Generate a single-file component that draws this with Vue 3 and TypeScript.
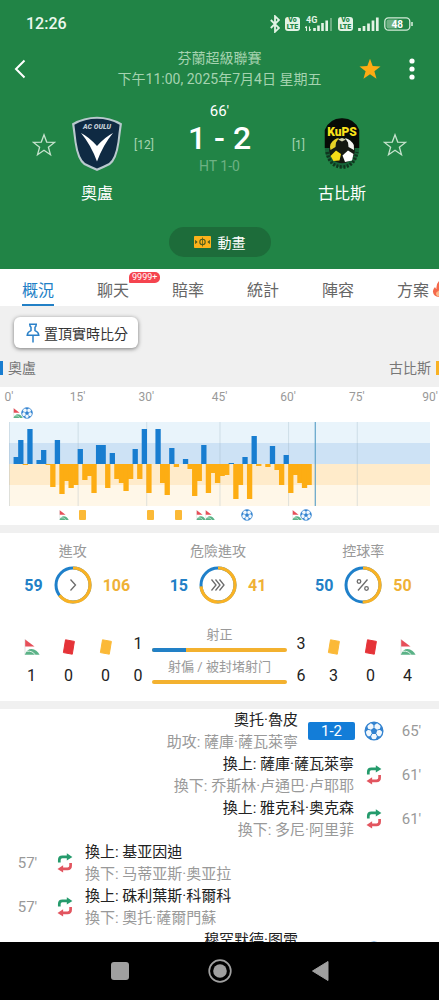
<script setup lang="ts">
type Side = 'home' | 'away'

interface MatchEvent {
  side: Side
  kind: 'goal' | 'sub'
  minute: string
  main: string
  detail: string
  score?: string
}

interface Marker {
  slot: number
  icon: 'flag' | 'ball' | 'card'
}

const tabs = ['概況', '聊天', '賠率', '統計', '陣容', '方案']

const slots = 92
const axis = [
  { slot: 0, label: "0'" },
  { slot: 15, label: "15'" },
  { slot: 30, label: "30'" },
  { slot: 46, label: "45'" },
  { slot: 61, label: "60'" },
  { slot: 76, label: "75'" },
  { slot: 92, label: "90'" },
]

// Positive values are home pressure, negative values are away pressure.
const pressure: number[] = [
  0, 7, 24, -1, 35, 0, 4, 14, -1, -23, 24, -30, -17, -24, -21, 15, -16, -12, -29, 19,
  19, -24, 11, -15, -19, -27, -15, 15, -15, 35, -29, 0, 35, -19, -31, 16, -3, 0, 5, -5,
  -32, -17, 19, -29, -9, -19, -12, -11, 1, -35, -21, 7, -35, 28, -2, 0, -3, 18, -6, -21,
  9, -29, -11, -19, -24, -21,
]

const homeMarkers: Marker[] = [
  { slot: 2, icon: 'flag' },
  { slot: 4, icon: 'ball' },
]
const awayMarkers: Marker[] = [
  { slot: 12, icon: 'flag' },
  { slot: 16, icon: 'card' },
  { slot: 31, icon: 'card' },
  { slot: 37, icon: 'card' },
  { slot: 42, icon: 'flag' },
  { slot: 44, icon: 'flag' },
  { slot: 52, icon: 'ball' },
  { slot: 63, icon: 'flag' },
  { slot: 65, icon: 'ball' },
]

const rings = [
  { title: '進攻', home: 59, away: 106, icon: 'one' },
  { title: '危險進攻', home: 15, away: 41, icon: 'three' },
  { title: '控球率', home: 50, away: 50, icon: 'percent' },
]
const circumference = 2 * Math.PI * 17
const awayArc = (home: number, away: number) => {
  const length = (circumference * away) / (home + away)
  return `${length} ${circumference - length}`
}

const homeCards = [
  { icon: 'corner', value: 1, label: '角球' },
  { icon: 'red', value: 0, label: '紅牌' },
  { icon: 'yellow', value: 0, label: '黃牌' },
]
const awayCards = [
  { icon: 'yellow', value: 3, label: '黃牌' },
  { icon: 'red', value: 0, label: '紅牌' },
  { icon: 'corner', value: 4, label: '角球' },
]
const shots = [
  { label: '射正', home: 1, away: 3 },
  { label: '射偏 / 被封堵射门', home: 0, away: 6 },
]

const events: MatchEvent[] = [
  { side: 'away', kind: 'goal', minute: "65'", main: '奧托·魯皮', detail: '助攻: 薩庫·薩瓦萊寧', score: '1-2' },
  { side: 'away', kind: 'sub', minute: "61'", main: '換上: 薩庫·薩瓦萊寧', detail: '換下: 乔斯林·卢通巴·卢耶耶' },
  { side: 'away', kind: 'sub', minute: "61'", main: '換上: 雅克科·奥克森', detail: '換下: 多尼·阿里菲' },
  { side: 'home', kind: 'sub', minute: "57'", main: '換上: 基亚因迪', detail: '換下: 马蒂亚斯·奥亚拉' },
  { side: 'home', kind: 'sub', minute: "57'", main: '換上: 硃利葉斯·科爾科', detail: '換下: 奧托·薩爾門蘇' },
  { side: 'away', kind: 'goal', minute: '', main: '穆罕默德·图雷', detail: '', score: '' },
]
</script>

<template>
  <div class="app">
    <svg class="defs" aria-hidden="true">
      <symbol id="i-ball" viewBox="0 0 20 20">
        <circle cx="10" cy="10" r="8.9" fill="#f2f8fd" stroke="#3383d0" stroke-width="1.3" />
        <path d="M10 6.6l3.3 2.4-1.2 3.9H7.9L6.7 9z" fill="#3383d0" />
        <path d="M6.4 1.7Q10 .4 13.6 1.7L10 4.6zM17 4.400Q19.300 7.400 19 11.500L15.600 8.500zM17 15.400Q14.800 18.200 11.600 18.900L13 15zM3 15.400Q5.200 18.200 8.400 18.900L7 15zM3 4.400Q.7 7.400 1 11.500L4.400 8.500z" fill="#3383d0" />
        <path d="M10 6.600V4M13.300 9L16 8.300M12.100 12.900L13.500 15.400M7.900 12.900L6.500 15.400M6.700 9L4 8.300" stroke="#3383d0" />
      </symbol>
      <symbol id="i-flag" viewBox="0 0 16 16">
        <path d="M1 0V16" stroke="#d9dcdc" stroke-width=".8" />
        <path d="M1.200.5L10.500 7.400H1.200z" fill="#e64f59" />
        <path d="M.8 15.800Q3 10 7.500 10Q13 10.400 15.600 15.800z" fill="#5bb287" />
        <path d="M2.600 12.200Q9 11.800 11 15.800" fill="none" stroke="#dff1e7" />
      </symbol>
      <symbol id="i-card" viewBox="0 0 16 16">
        <path d="M4.500.8L13.400 2.400L11.300 15.200L2.400 13.600z" fill="currentColor" stroke="currentColor" stroke-linejoin="round" />
      </symbol>
      <symbol id="i-sub" viewBox="0 0 20 20">
        <path d="M4.300 9.600V7Q4.300 3.900 7.400 3.900H13" fill="none" stroke="#259b6c" stroke-width="2.700" />
        <path d="M11.800.2L17.400 3.900L11.800 7.600z" fill="#259b6c" />
        <path d="M15.600 10V12.800Q15.600 15.900 12.500 15.900H7" fill="none" stroke="#e2555f" stroke-width="2.700" />
        <path d="M8.100 12.200L2.500 15.900L8.100 19.600z" fill="#e2555f" />
      </symbol>
      <symbol id="i-star" viewBox="0 0 24 24">
        <path d="M12 1.800L14.700 9.100L22.500 9.400L16.400 14.200L18.500 21.700L12 17.300L5.500 21.700L7.600 14.200L1.500 9.400L9.300 9.100z" />
      </symbol>
    </svg>

    <header class="hero">
      <div class="status">
        <time>12:26</time>
        <div class="status-icons">
          <svg width="10" height="18" viewBox="0 0 10 18"><path d="M.8 5L9 13L5 16.800V1.200L9 5L.8 13" fill="none" stroke="#e3f3e5" stroke-width="1.800" /></svg>
          <span class="volte"><span>Vo</span><span>LTE</span></span>
          <svg width="28" height="16" viewBox="0 0 28 16">
            <text x="1" y="7" class="net-text">4G</text>
            <path d="M1.500 15V10.500M.2 12L1.500 10.200M4.500 10.500V15M4.500 15L5.800 13.200" stroke="#e3f3e5" stroke-width="1.100" fill="none" />
            <path d="M9.500 15V12M13.500 15V9.500M17.500 15V7M21.700 15V4.500" stroke="#e3f3e5" stroke-width="2.600" />
            <path d="M26 15V2" stroke="#6aad80" stroke-width="2" />
          </svg>
          <span class="volte"><span>Vo</span><span>LTE</span></span>
          <svg width="21" height="14" viewBox="0 0 21 14"><path d="M1.500 14V11M6 14V9M10.500 14V6.500M15 14V3.500M19.300 14V.5" stroke="#e3f3e5" stroke-width="2.700" /></svg>
          <svg width="29" height="14" viewBox="0 0 29 14">
            <rect x=".8" y=".8" width="25" height="12.400" rx="3.600" fill="none" stroke="#d2ead7" stroke-width="1.300" />
            <path d="M4.500 2.500H13.500V11.500H4.500Q2.500 11.500 2.500 9.500V4.500Q2.500 2.500 4.500 2.500z" fill="#6fb184" />
            <path d="M28 5V9" stroke="#d2ead7" stroke-width="1.600" />
            <text x="13.300" y="10.700" text-anchor="middle" class="battery-text">48</text>
          </svg>
        </div>
      </div>

      <div class="title-bar">
        <button class="bare back" aria-label="返回">
          <svg width="12" height="20" viewBox="0 0 12 20"><path d="M10.500 1.500L2 10L10.500 18.500" fill="none" stroke="#fff" stroke-width="2" /></svg>
        </button>
        <div class="title-text">
          <div>芬蘭超級聯賽</div>
          <div>下午11:00, 2025年7月4日 星期五</div>
        </div>
        <div class="title-actions">
          <button class="bare act-star" aria-label="收藏比賽"><svg width="24" height="24" fill="#fdab14"><use href="#i-star" /></svg></button>
          <button class="bare act-more" aria-label="更多"><svg width="6" height="22" viewBox="0 0 6 22" fill="#fff"><circle cx="3" cy="3" r="2.600" /><circle cx="3" cy="11" r="2.600" /><circle cx="3" cy="19" r="2.600" /></svg></button>
        </div>
      </div>

      <div class="scoreboard">
        <button class="bare fav" aria-label="收藏奧盧"><svg width="24" height="24" fill="none" stroke="#c6e3cd" stroke-width="1.300"><use href="#i-star" /></svg></button>
        <div class="team">
          <svg width="52" height="56" viewBox="0 0 52 56">
            <path d="M1 7.500Q13 .8 26 .8T51 7.500Q50 14 48.500 26Q46 44 39 49Q33 52 26 55Q19 52 13 49Q6 44 3.500 26Q2 14 1 7.500z" fill="#b9c9ce" />
            <path d="M3.400 8.700Q14 2.800 26 2.800T48.600 8.700Q47.600 16 46.500 26Q44 42.500 38 47Q32 50 26 52.600Q20 50 14 47Q8 42.500 5.500 26Q4.400 16 3.400 8.700z" fill="#0f2a43" />
            <text x="26" y="13" text-anchor="middle" class="crest-home">AC OULU</text>
            <path d="M10 17Q18 21 26 30Q34 21 42 17Q32 29 26 45.500Q20 29 10 17z" fill="#fff" />
          </svg>
          <div class="team-name">奧盧</div>
        </div>
        <div class="rank">[12]</div>
        <div class="score">
          <div class="minute">66'</div>
          <div class="goals">1 - 2</div>
          <div class="half">HT 1-0</div>
        </div>
        <div class="rank rank-away">[1]</div>
        <div class="team">
          <svg width="36" height="56" viewBox="0 0 36 56">
            <path d="M.8 32V14Q5 2.500 18 2.200Q31 2.500 35.200 14V32Q35 48 18 52Q1 48 .8 32z" fill="#166438" />
            <path d="M.8 32V14Q5 2.500 18 2.200Q31 2.500 35.200 14V32z" fill="#070b06" />
            <path d="M3 36Q6 51 18 51T33 36" fill="none" stroke="#10351e" stroke-width="3.500" stroke-dasharray="2 1.500" />
            <circle cx="18" cy="34.500" r="12.800" fill="#151a12" />
            <path d="M6.500 28Q10 22.500 15 22L12 26.500L11.500 31L6.500 34Q5.500 31 6.500 28z" fill="#e6d326" />
            <path d="M21 22Q27 23.500 29.800 29L30 34L24.500 31L24 26.500z" fill="#f4f6f2" />
            <path d="M14 23.500L18 22L22 23.500L18 25.500z" fill="#d6d6b0" />
            <path d="M12 34.500L17 38L15.500 44.500L9.500 45L6.500 40z" fill="#f5dc17" />
            <path d="M24 34.500L29.500 38L28 44.500L21 46L18.500 39.500z" fill="#fff" />
            <text x="18" y="19.500" text-anchor="middle" class="crest-away">KuPS</text>
          </svg>
          <div class="team-name">古比斯</div>
        </div>
        <button class="bare fav" aria-label="收藏古比斯"><svg width="24" height="24" fill="none" stroke="#c6e3cd" stroke-width="1.300"><use href="#i-star" /></svg></button>
      </div>

      <button class="animation">
        <svg width="17" height="12" viewBox="0 0 17 12">
          <rect width="17" height="12" rx=".8" fill="#fcb21b" />
          <circle cx="8.500" cy="6" r="2.700" fill="none" stroke="#4f5b1c" stroke-width="1.100" />
          <path d="M8.500 1.500V10.500M1.500 4.500L3.200 6L1.500 7.500zM15.500 4.500L13.800 6L15.500 7.500z" fill="#4f5b1c" stroke="#4f5b1c" stroke-width=".8" />
        </svg>
        <span>動畫</span>
      </button>
    </header>

    <nav class="tabs">
      <button v-for="(tab, i) in tabs" :key="tab" class="bare tab" :class="{ active: i === 0 }">
        {{ tab }}
        <span v-if="i === 1" class="badge">9999+</span>
        <svg v-if="i === 5" class="flame" width="14" height="16" viewBox="0 0 14 16">
          <path d="M7 0Q8.500 3 10.500 5Q13.500 8 13 11Q12 16 7 16Q1.500 15.500 1 11Q.6 8.500 3 6Q3.500 7.500 4.500 8Q4 3 7 0z" fill="#f4694b" />
          <path d="M7.500 7Q10.500 10 10 12.500Q9.500 15.500 7 15.500Q4 15 4 12.500Q4.200 11 5.500 10.500Q7.500 9.500 7.500 7z" fill="#fdb98a" />
        </svg>
      </button>
    </nav>

    <main class="content">
      <section class="pin-area">
        <button class="pin">
          <svg width="14" height="20" viewBox="0 0 14 20"><path d="M3 1.200H11M4 1.200V3L5 4.200V7.600Q1.500 9 1.200 12.200H12.800Q12.500 9 9 7.600V4.200L10 3V1.200M7 12.200V19.500" fill="none" stroke="#2a80c8" stroke-width="1.500" /></svg>
          <span>置頂實時比分</span>
        </button>
        <div class="legend">
          <span class="legend-home">奧盧</span>
          <span class="legend-away">古比斯</span>
        </div>
      </section>

      <section class="chart">
        <div class="track axis">
          <span v-for="(a, i) in axis" :key="a.label" class="tick" :class="{ last: i === axis.length - 1 }" :style="{ gridColumnStart: Math.min(a.slot + 1, slots) }">{{ a.label }}</span>
        </div>
        <div class="track markers">
          <span v-for="m in homeMarkers" :key="m.slot" class="tick" :style="{ gridColumnStart: m.slot + 1 }">
            <svg :class="['m-' + m.icon]"><use :href="'#i-' + m.icon" /></svg>
          </span>
        </div>
        <svg class="plot" :viewBox="`0 0 ${slots} 84`" preserveAspectRatio="none">
          <rect :width="slots" height="21" fill="#e9f4fb" />
          <rect y="21" :width="slots" height="21" fill="#cde2f5" />
          <rect y="42" :width="slots" height="21" fill="#ffebca" />
          <rect y="63" :width="slots" height="21" fill="#fff7e8" />
          <rect v-for="a in axis.slice(0, 6)" :key="a.slot" :x="a.slot" width=".2" height="84" fill="#8ba5b5" opacity=".3" />
          <template v-for="(v, i) in pressure" :key="i">
            <rect v-if="v > 0" :x="i" :y="42 - v" width="1.160" :height="v" fill="#187dd0" />
            <rect v-if="v < 0" :x="i" y="42" width="1.160" :height="-v" fill="#fdad13" />
          </template>
          <rect x="66.800" width=".26" height="84" fill="#5fa3c8" />
        </svg>
        <div class="track markers">
          <span v-for="m in awayMarkers" :key="m.slot" class="tick" :style="{ gridColumnStart: m.slot + 1 }">
            <i v-if="m.icon === 'card'" class="m-card"></i>
            <svg v-else :class="['m-' + m.icon]"><use :href="'#i-' + m.icon" /></svg>
          </span>
        </div>
      </section>

      <section class="stats">
        <div class="rings">
          <div v-for="r in rings" :key="r.title" class="ring-cell">
            <div class="ring-title">{{ r.title }}</div>
            <div class="ring-row">
              <b class="ring-home">{{ r.home }}</b>
              <svg width="38" height="38" viewBox="0 0 38 38" fill="none">
                <circle cx="19" cy="19" r="17" stroke="#1f80ca" stroke-width="3" />
                <circle cx="19" cy="19" r="17" stroke="#f9b224" stroke-width="3.200" :stroke-dasharray="awayArc(r.home, r.away)" transform="rotate(-90 19 19)" />
                <g stroke="#6b6b6b" stroke-width="1.300">
                  <path v-if="r.icon === 'one'" d="M16.500 13.500L21.500 19L16.500 24.500" />
                  <path v-else-if="r.icon === 'three'" d="M12.500 13.500L17 19L12.500 24.500M16.500 13.500L21 19L16.500 24.500M20.500 13.500L25 19L20.500 24.500" />
                  <template v-else>
                    <path d="M23.500 13.500L14 24.500" />
                    <circle cx="15" cy="15.500" r="1.800" />
                    <circle cx="22.500" cy="22.500" r="1.800" />
                  </template>
                </g>
              </svg>
              <b class="ring-away">{{ r.away }}</b>
            </div>
          </div>
        </div>

        <div class="counts">
          <div v-for="c in homeCards" :key="c.icon" class="count">
            <svg width="16" height="16" :class="c.icon" role="img" :aria-label="c.label"><use :href="c.icon === 'corner' ? '#i-flag' : '#i-card'" /></svg>
            <span>{{ c.value }}</span>
          </div>
          <div class="shot-values"><span v-for="s in shots" :key="s.label">{{ s.home }}</span></div>
          <div class="shots">
            <div v-for="s in shots" :key="s.label" class="shot">
              <div class="shot-label">{{ s.label }}</div>
              <div class="bar"><div class="bar-home" :style="{ width: (100 * s.home) / (s.home + s.away) + '%' }"></div></div>
            </div>
          </div>
          <div class="shot-values"><span v-for="s in shots" :key="s.label">{{ s.away }}</span></div>
          <div v-for="c in awayCards" :key="c.icon" class="count">
            <svg width="16" height="16" :class="c.icon" role="img" :aria-label="c.label"><use :href="c.icon === 'corner' ? '#i-flag' : '#i-card'" /></svg>
            <span>{{ c.value }}</span>
          </div>
        </div>
      </section>

      <ul class="events">
        <li v-for="(e, i) in events" :key="i" class="event" :class="e.side">
          <time class="event-time">{{ e.minute }}</time>
          <svg width="20" height="20"><use :href="e.kind === 'goal' ? '#i-ball' : '#i-sub'" /></svg>
          <span v-if="e.kind === 'goal'" class="event-score">{{ e.score }}</span>
          <div class="event-text">
            <div>{{ e.main }}</div>
            <div class="detail">{{ e.detail }}</div>
          </div>
        </li>
      </ul>
    </main>

    <footer class="system-nav">
      <button class="bare" aria-label="最近"><svg width="18" height="18"><rect width="18" height="18" rx="3" fill="#a0a0a0" /></svg></button>
      <button class="bare" aria-label="主畫面"><svg width="24" height="24" viewBox="0 0 24 24"><circle cx="12" cy="12" r="10.800" fill="none" stroke="#a0a0a0" stroke-width="1.700" /><circle cx="12" cy="12" r="6.800" fill="#a0a0a0" /></svg></button>
      <button class="bare" aria-label="上一頁"><svg width="18" height="22" viewBox="0 0 18 22"><path d="M17 1.500V20.500L1.500 11z" fill="#a0a0a0" stroke="#a0a0a0" stroke-linejoin="round" /></svg></button>
    </footer>
  </div>
</template>

<style>
body {
  margin: 0;
  background: #fff;
}
</style>

<style scoped>
.app {
  display: flex;
  flex-direction: column;
  height: 100vh;
  overflow: hidden;
  background: #fff;
  color: #222;
  font-family: Roboto, "Noto Sans CJK TC", "Noto Sans CJK SC", sans-serif;
  font-size: 14px;
}
svg {
  display: block;
  flex: none;
}
.defs {
  position: absolute;
  width: 0;
  height: 0;
}
button {
  font: inherit;
  color: inherit;
  cursor: pointer;
}
.bare {
  display: flex;
  align-items: center;
  justify-content: center;
  padding: 0;
  border: 0;
  background: none;
}

.hero {
  flex: none;
  padding-bottom: 12px;
  background: #218446;
  color: #fff;
}
.status {
  display: flex;
  align-items: center;
  justify-content: space-between;
  height: 47px;
  padding: 0 26px;
  color: #ecf8ee;
  font-size: 16px;
  font-weight: 500;
}
.status-icons {
  display: flex;
  align-items: center;
  gap: 5px;
}
.volte {
  display: flex;
  flex-direction: column;
  align-items: center;
  width: 15px;
  border-radius: 3px;
  background: #e3f3e5;
  color: #218446;
  font-size: 7px;
  font-weight: 900;
  line-height: 7px;
}
.net-text {
  fill: #e3f3e5;
  font-size: 9px;
  font-weight: 700;
}
.battery-text {
  fill: #fff;
  font-size: 10px;
  font-weight: 700;
}
.title-bar {
  display: grid;
  grid-template-columns: 92px 1fr 92px;
  align-items: center;
  height: 44px;
}
.back {
  width: 40px;
  height: 40px;
}
.title-text {
  color: #a5d3b0;
  line-height: 21px;
  text-align: center;
  white-space: nowrap;
}
.title-actions {
  display: flex;
  justify-content: flex-end;
  padding-right: 7px;
}
.act-star {
  width: 44px;
  height: 40px;
}
.act-more {
  width: 40px;
  height: 40px;
}
.scoreboard {
  display: flex;
  align-items: flex-start;
  padding: 12px 24px 0;
}
.fav {
  width: 40px;
  height: 28px;
  margin-top: 28px;
}
.team {
  display: flex;
  flex-direction: column;
  align-items: center;
  gap: 10px;
  width: 66px;
  padding-top: 13px;
}
.crest-home {
  fill: #c3ced6;
  font-size: 7px;
  font-style: italic;
  font-weight: 900;
}
.crest-away {
  fill: #f9e21a;
  font-size: 12px;
  font-weight: 900;
}
.team-name {
  font-size: 16px;
  line-height: 24px;
  white-space: nowrap;
}
.rank {
  box-sizing: border-box;
  width: 28px;
  margin-top: 34px;
  padding: 0 4px;
  color: #a5d3b0;
  font-size: 12px;
  line-height: 16px;
}
.rank-away {
  text-align: right;
}
.score {
  flex: 1;
  text-align: center;
}
.minute {
  font-size: 15px;
  line-height: 17px;
}
.goals {
  font-size: 32px;
  font-weight: 500;
  line-height: 36px;
}
.half {
  color: #6db183;
  line-height: 20px;
}
.animation {
  display: flex;
  align-items: center;
  justify-content: center;
  gap: 7px;
  width: 102px;
  height: 30px;
  margin: 21px auto 0;
  padding: 0;
  border: 0;
  border-radius: 15px;
  background: #1d6c3a;
  color: #fff;
}

.tabs {
  display: flex;
  flex: none;
  gap: 43px;
  height: 37px;
  padding: 0 22px;
  overflow: hidden;
  color: #666;
  font-size: 16px;
  white-space: nowrap;
}
.tab {
  position: relative;
  flex: none;
  box-sizing: border-box;
  border-top: 4px solid transparent;
  border-bottom: 2px solid transparent;
}
.tab.active {
  border-bottom-color: #2280c6;
  color: #2280c6;
}
.badge {
  position: absolute;
  top: -1px;
  left: 32px;
  padding: 0 3px;
  border-radius: 5px 5px 5px 1px;
  background: #f5444f;
  color: #fff;
  font-size: 9px;
  line-height: 11px;
}
.flame {
  margin-left: 3px;
}

.content {
  flex: 1;
  min-height: 0;
  overflow-y: auto;
  scrollbar-width: none;
}
.pin-area {
  padding-top: 11px;
  background: #f0f0f0;
}
.pin {
  display: flex;
  align-items: center;
  gap: 4px;
  height: 31px;
  margin-left: 14px;
  padding: 0 10px 0 12px;
  border: 0;
  border-radius: 6px;
  background: #fff;
  box-shadow: 0 1px 4px rgba(0, 0, 0, 0.5);
  color: #333;
}
.legend {
  display: flex;
  align-items: center;
  justify-content: space-between;
  height: 39px;
  color: #777;
  line-height: 14px;
}
.legend-home {
  padding-left: 5px;
  border-left: 3px solid #187dd0;
}
.legend-away {
  padding-right: 5px;
  border-right: 3px solid #f9b224;
}

.chart {
  padding: 0 9px 4px;
  border-bottom: 8px solid #f0f0f0;
}
.track {
  display: grid;
  grid-template-columns: repeat(92, minmax(0, 1fr));
  align-items: center;
}
.axis {
  height: 20px;
  color: #999;
  font-size: 12px;
}
.tick {
  display: flex;
  grid-row: 1;
  justify-content: center;
  width: 0;
}
.last {
  justify-self: end;
}
.markers {
  height: 12px;
}
.m-ball {
  width: 12px;
  height: 12px;
}
.m-flag {
  width: 10px;
  height: 10px;
}
.m-card {
  flex: none;
  width: 7px;
  height: 10px;
  border-radius: 1px;
  background: #fbb937;
}
.plot {
  width: 100%;
  height: 84px;
  margin: 3px 0;
}

.stats {
  padding: 8px 0 15px;
  border-bottom: 8px solid #f0f0f0;
}
.rings {
  display: grid;
  grid-template-columns: repeat(3, 1fr);
  padding-right: 3px;
}
.ring-title {
  color: #999;
  line-height: 20px;
  text-align: center;
}
.ring-row {
  display: grid;
  grid-template-columns: 1fr 38px 1fr;
  gap: 11px;
  align-items: center;
  margin-top: 5px;
  font-size: 16px;
}
.ring-home {
  color: #2280c6;
  text-align: right;
}
.ring-away {
  color: #efb136;
}
.counts {
  display: flex;
  padding: 21px 13px 0;
  font-size: 16px;
  line-height: 20px;
}
.count {
  display: flex;
  flex-direction: column;
  gap: 11px;
  align-items: center;
  width: 37px;
  padding-top: 14px;
}
.red {
  color: #e53338;
}
.yellow {
  color: #fbb937;
}
.shot-values {
  display: flex;
  flex-direction: column;
  gap: 12px;
  width: 28px;
  padding-top: 9px;
  text-align: center;
}
.shots {
  display: flex;
  flex: 1;
  flex-direction: column;
  gap: 5px;
}
.shot-label {
  color: #999;
  font-size: 13px;
  text-align: center;
  white-space: nowrap;
}
.bar {
  height: 4px;
  margin-top: 3px;
  overflow: hidden;
  border-radius: 2px;
  background: #f3b12f;
}
.bar-home {
  height: 4px;
  background: #2280c6;
}

.events {
  margin: 0;
  padding: 0;
  list-style: none;
}
.event {
  display: flex;
  align-items: center;
  min-height: 44px;
  font-size: 15px;
  line-height: 22px;
}
.away {
  flex-direction: row-reverse;
  text-align: right;
}
.event-time {
  width: 55px;
  color: #999;
  text-align: center;
}
.event-score {
  width: 47px;
  min-height: 18px;
  margin-right: 9px;
  border-radius: 2px;
  background: #137dd8;
  color: #fff;
  line-height: 18px;
  text-align: center;
}
.event-text {
  min-height: 44px;
  margin: 0 10px;
}
.detail {
  color: #999;
}

.system-nav {
  display: flex;
  flex: none;
  justify-content: center;
  height: 58px;
  background: #000;
}
.system-nav button {
  width: 100px;
}
</style>
